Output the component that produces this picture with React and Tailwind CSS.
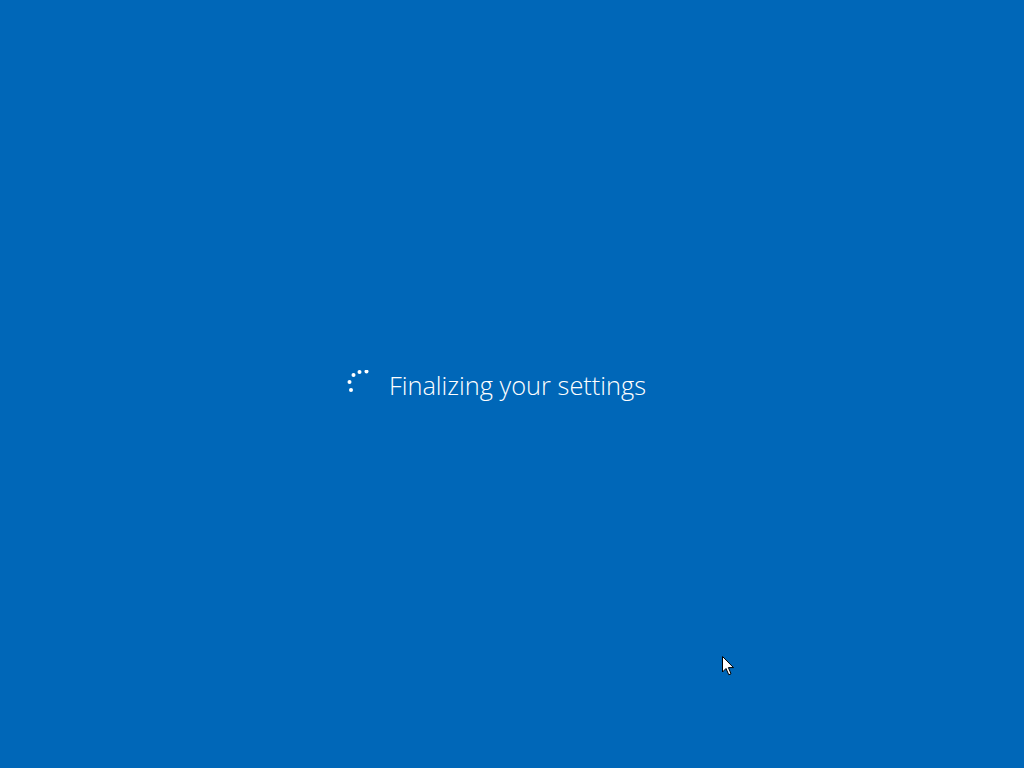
const Spinner = () => (
  <svg width="28" height="32" viewBox="0 0 28 32" className="shrink-0">
    <circle cx="6" cy="20" r="2" fill="#fff" />
    <circle cx="4.5" cy="12" r="2" fill="#fff" />
    <circle cx="8.5" cy="5" r="2" fill="#fff" />
    <circle cx="14.5" cy="2" r="2" fill="#fff" />
    <circle cx="21.5" cy="1.5" r="2" fill="#fff" />
  </svg>
);

const Cursor = () => (
  <svg width="13" height="20" viewBox="0 0 13 20" className="absolute left-[722px] top-[656px]">
    <path
      d="M0.5 0.5 L0.5 16 L4 12.5 L6.8 18.8 L9 17.8 L6.4 11.6 L11.5 11.6 Z"
      fill="#fff"
      stroke="#000"
      strokeWidth="1"
      strokeLinejoin="miter"
    />
  </svg>
);

export default function App() {
  return (
    <div className="relative w-full h-screen bg-[#0067b8] overflow-hidden flex items-center justify-center pr-[33px]">
      <div className="flex items-center gap-[16px] mt-[4px]">
        <Spinner />
        <span
          className="text-white text-[25.4px] font-light leading-none"
          style={{ fontFamily: '"Open Sans", "Noto Sans", sans-serif' }}
        >
          Finalizing your settings
        </span>
      </div>
      <Cursor />
    </div>
  );
}
